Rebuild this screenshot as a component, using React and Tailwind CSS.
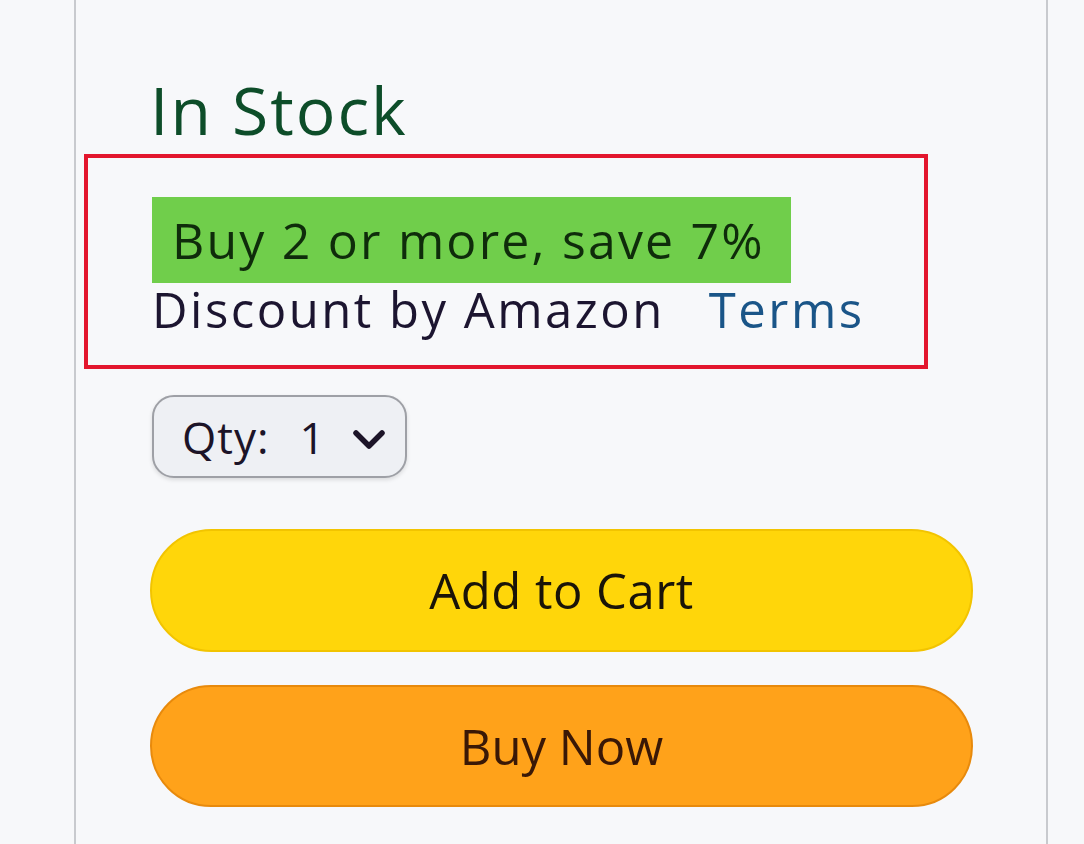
export default function App() {
  return (
    <div className="w-[1084px] h-[844px] bg-[#f7f8fa] flex overflow-hidden font-['Open_Sans',sans-serif]">
      <div className="w-[74px] shrink-0" />

      {/* Buy box panel */}
      <div className="w-[974px] shrink-0 border-x-2 border-[#c8cace] flex flex-col">
        <div className="pl-[74px] pt-[76px] text-[66px] leading-none tracking-[2px] text-[#0d4d29]">In Stock</div>

        {/* Highlighted offer */}
        <div className="mt-[12px] ml-[8px] w-[844px] h-[215px] border-4 border-[#e3162d] pt-[39px] pl-[64px]">
          <div className="inline-flex items-center h-[86px] pl-[20px] pr-[26px] bg-[#70ce4b] text-[50px] leading-none text-[#0f2c0b] tracking-[2.2px]">
            Buy 2 or more, save 7%
          </div>
          <div className="mt-[2px] text-[49px] leading-none text-[#1c1530] tracking-[2.5px] flex gap-[44px]">
            <span>Discount by Amazon</span>
            <span className="text-[#1a5588]">Terms</span>
          </div>
        </div>

        {/* Quantity */}
        <div className="ml-[76px] mt-[26px] w-[255px] h-[83px] rounded-[22px] border-2 border-[#9ea0a6] bg-[#eef0f4] shadow-[0_2px_4px_rgba(0,0,0,0.12)] flex items-center pl-[28px] text-[44px] leading-none tracking-[1px] text-[#1c1428]">
          <span>Qty:</span>
          <span className="ml-[30px]">1</span>
          <svg className="ml-[26px] mt-[4px]" width="34" height="24" viewBox="0 0 34 24" fill="none">
            <path d="M4 6 L17 19 L30 6" stroke="#1c1428" strokeWidth="5.5" strokeLinecap="round" strokeLinejoin="round" />
          </svg>
        </div>

        {/* Buttons */}
        <div className="ml-[74px] mt-[51px] w-[823px] flex flex-col gap-[33px]">
          <button className="h-[123px] rounded-full bg-[#ffd60a] border-2 border-[#f2c400] text-[49px] leading-none tracking-[0.5px] text-[#1a1408]">
            Add to Cart
          </button>
          <button className="h-[122px] rounded-full bg-[#ffa21a] border-2 border-[#e88a0c] text-[49px] leading-none text-[#3a1806]">
            Buy Now
          </button>
        </div>
      </div>
    </div>
  );
}
